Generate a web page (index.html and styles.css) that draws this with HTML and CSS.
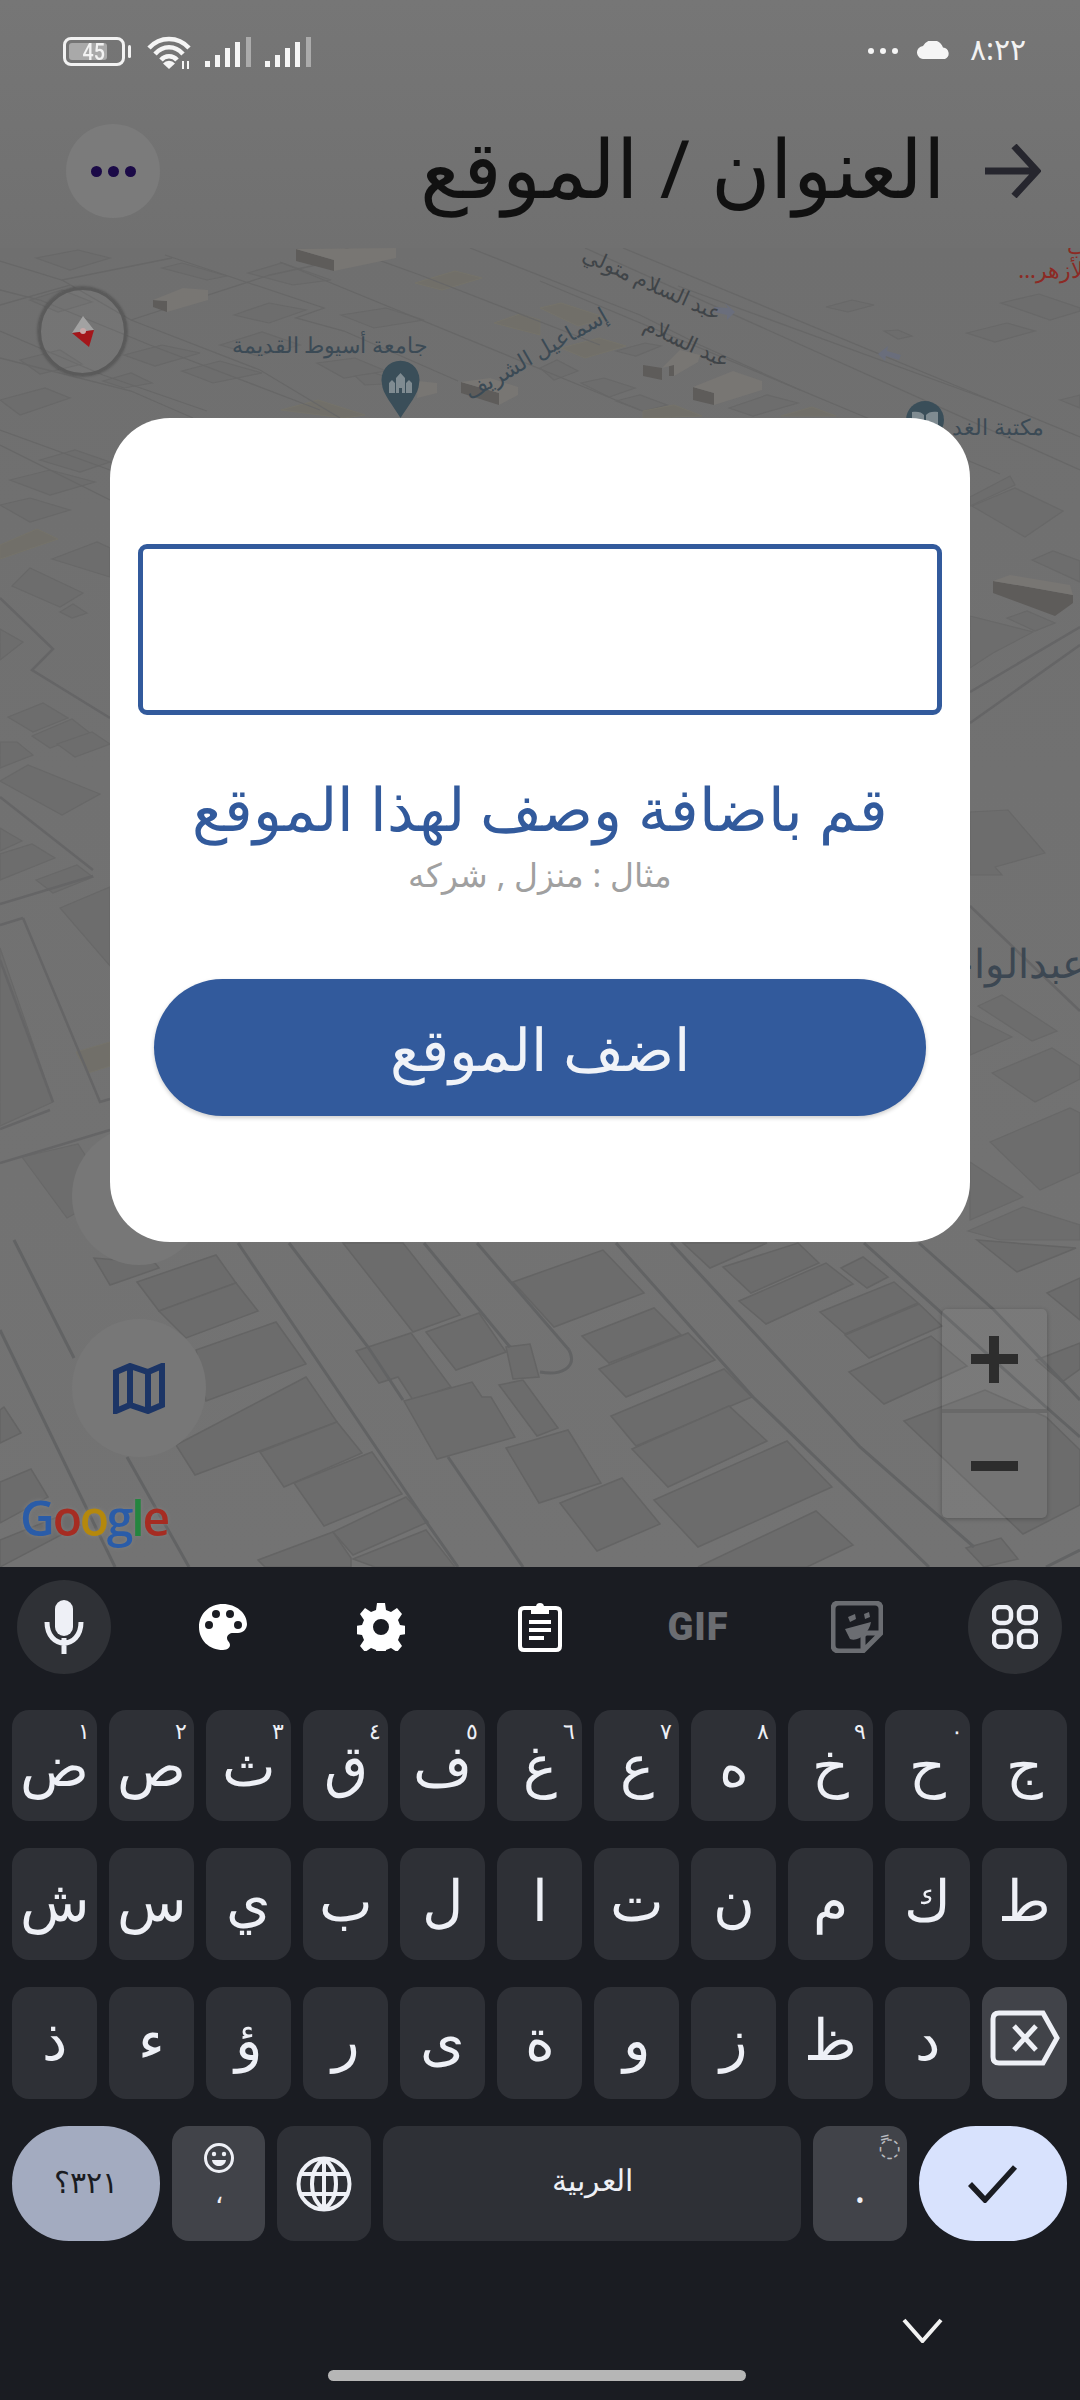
FILE: index.html
```html
<!doctype html>
<html lang="ar">
<head>
<meta charset="utf-8">
<title>العنوان / الموقع</title>
<link rel="stylesheet" href="styles.css">
</head>
<body>
<div class="page">
  <header class="top">
    <div class="status">
      <div class="status-left">
        <div class="battery"><span class="battery-fill"></span><span class="battery-num">45</span></div>
        <span class="battery-tip"></span>
        <svg class="wifi" viewBox="0 0 46 34"><path class="wifi-arc" d="M3 13C14 1 32 1 43 13"/><path class="wifi-arc" d="M9 19C17 10 29 10 37 19"/><path class="wifi-arc" d="M15 25C19 20 27 20 31 25"/><path class="wifi-dot" d="M23 34l-6-5.500a8 8 0 0 1 12 0z"/><path class="wifi-dot" d="M36 26h2v8h-2zM41 26h2v8h-2z"/></svg>
        <svg class="signal" viewBox="0 0 47 30"><path class="bar-on" d="M0 24h5v6H0zM10 18h5v12h-5zM20 11h5v19h-5zM30 5h5v25h-5z"/><path class="bar-off" d="M41 0h5v30h-5z"/></svg>
        <svg class="signal signal-2" viewBox="0 0 47 30"><path class="bar-on" d="M0 24h5v6H0zM10 18h5v12h-5zM20 11h5v19h-5zM30 5h5v25h-5z"/><path class="bar-off" d="M41 0h5v30h-5z"/></svg>
      </div>
      <div class="status-right">
        <span class="sdots"><i></i><i></i><i></i></span>
        <svg class="cloud" viewBox="0 0 34 18"><path d="M7 18a6.500 6.500 0 0 1-1-13A11 11 0 0 1 26 6.500 6 6 0 0 1 28 18z"/></svg>
        <span class="clock">٨:٢٢</span>
      </div>
    </div>
    <div class="appbar">
      <button class="more"><i></i><i></i><i></i></button>
      <div class="appbar-title">
        <h1 class="title">العنوان / الموقع</h1>
        <svg class="back" viewBox="0 0 56 54"><path d="M0 27H52M29 2l23 25-23 25"/></svg>
      </div>
    </div>
  </header>

  <main class="map">
    <svg class="map-svg" viewBox="0 248 1080 1319" preserveAspectRatio="none">
      <g class="blocks">
        <polygon points="94,1258 110,1285 159,1268 155,1263"/>
        <polygon points="137,1282 216,1255 236,1283 159,1311"/>
        <polygon points="159,1311 236,1283 258,1311 186,1338"/>
        <polygon points="196,1350 276,1322 306,1364 206,1401"/>
        <polygon points="176,1445 306,1377 337,1422 195,1475"/>
        <polygon points="260,1452 337,1422 362,1453 284,1487"/>
        <polygon points="294,1483 372,1452 402,1494 324,1526"/>
        <polygon points="333,1532 406,1497 428,1522 353,1555"/>
        <polygon points="353,1559 426,1530 455,1567 375,1567"/>
        <polygon points="258,1560 333,1532 351,1558 351,1567 265,1567"/>
        <polygon points="0,1443 21,1433 4,1407 0,1410"/>
        <polygon points="0,1482 31,1469 48,1497 0,1523"/>
        <polygon points="0,1540 70,1512 80,1525 0,1567"/>
        <polygon points="343,1243 403,1243 460,1315 413,1332"/>
        <polygon points="356,1351 411,1333 451,1387 413,1400 398,1377 379,1383"/>
        <polygon points="426,1332 479,1313 506,1352 456,1370"/>
        <polygon points="404,1401 472,1382 482,1397 491,1397 515,1437 437,1459"/>
        <polygon points="506,1347 530,1344 539,1377 513,1379"/>
        <polygon points="499,1385 523,1380 558,1428 537,1436"/>
        <polygon points="506,1448 568,1430 601,1483 539,1503"/>
        <polygon points="560,1503 622,1478 660,1524 597,1551"/>
        <polygon points="513,1282 603,1250 644,1293 554,1327"/>
        <polygon points="582,1336 654,1308 681,1335 609,1363"/>
        <polygon points="599,1369 688,1333 715,1360 626,1397"/>
        <polygon points="611,1416 724,1369 752,1397 636,1446"/>
        <polygon points="632,1449 729,1406 767,1441 668,1487"/>
        <polygon points="654,1500 787,1441 832,1487 698,1547"/>
        <polygon points="698,1567 816,1511 853,1545 807,1567"/>
        <polygon points="683,1243 767,1243 710,1268"/>
        <polygon points="723,1267 798,1243 819,1263 751,1293"/>
        <polygon points="739,1301 826,1263 853,1284 766,1324"/>
        <polygon points="841,1268 863,1257 888,1277 867,1288"/>
        <polygon points="820,1312 894,1282 918,1303 845,1334"/>
        <polygon points="845,1335 919,1304 942,1326 869,1358"/>
        <polygon points="849,1372 931,1336 967,1366 884,1404"/>
        <polygon points="904,1421 985,1390 1046,1417 1080,1450 1080,1505 1023,1534"/>
        <polygon points="966,1548 1001,1538 1018,1559 984,1567"/>
        <polygon points="977,1240 1076,1248 1017,1272"/>
        <polygon points="1047,1293 1080,1278 1080,1320"/>
        <polygon points="1036,1360 1080,1343 1080,1369 1062,1382"/>
      </g>
      <g class="blocks blocks-soft">
        <polygon points="40,460 75,450 110,462 80,472"/>
        <polygon points="10,480 50,470 95,482 50,495"/>
        <polygon points="0,505 30,498 70,510 30,522"/>
        <polygon points="12,586 30,568 83,593 60,607"/>
        <polygon points="60,612 73,604 87,613 72,618"/>
        <polygon points="52,559 97,542 110,548 110,577"/>
        <polygon points="0,629 23,642 0,660"/>
        <polygon points="8,717 43,703 68,718 33,732"/>
        <polygon points="32,736 72,719 90,733 50,748"/>
        <polygon points="57,744 92,732 110,744 75,757"/>
        <polygon points="0,742 17,742 33,755 0,768"/>
        <polygon points="0,781 28,765 100,794 62,815"/>
        <polygon points="0,828 22,841 0,851"/>
        <polygon points="0,854 32,844 55,858 0,880"/>
        <polygon points="36,880 77,865 93,877 53,893"/>
        <polygon points="60,908 110,887 110,966"/>
        <polygon points="0,948 53,1102 0,1126"/>
        <polygon points="22,1157 78,1144 110,1194 67,1218"/>

        <polygon points="972,506 1015,488 1063,511 1025,537"/>
        <polygon points="970,497 1010,476 1015,485 970,506"/>
        <polygon points="1032,560 1053,551 1080,561 1080,582"/>
        <polygon points="1007,618 1027,611 1055,623 1035,631"/>
        <polygon points="970,616 1033,632 993,653 970,668"/>
        <polygon points="970,812 1008,810 1045,853 995,867 1002,875 970,875"/>
        <polygon points="978,1006 1002,995 1057,1031 1032,1041"/>
        <polygon points="970,1016 1012,1037 970,1055"/>
        <polygon points="992,1073 1052,1048 1080,1066 1080,1079 1035,1102"/>
        <polygon points="990,1142 1070,1108 1080,1113 1080,1172 1040,1190"/>
        <polygon points="970,1162 1023,1197 970,1220"/>
        <polygon points="968,1231 1023,1207 1080,1225 1080,1240 1000,1240"/>

        <polygon points="103,381 131,373 152,383 124,388"/>
        <polygon points="124,355 162,345 200,353 155,366"/>
        <polygon points="182,371 220,361 262,373 213,383"/>
        <polygon points="317,363 355,358 386,371 344,378"/>
        <polygon points="355,376 375,373 403,383 365,385"/>
        <polygon points="341,315 386,308 424,320 374,328"/>
        <polygon points="234,315 269,303 306,310 269,323"/>
        <polygon points="248,273 282,263 331,280 293,285"/>
        <polygon points="162,268 182,263 227,276 207,280"/>
        <polygon points="826,307 852,300 874,305 848,312"/>
        <polygon points="884,331 898,330 912,336 898,339"/>
        <polygon points="967,333 1007,323 1035,331 995,342"/>
        <polygon points="1001,303 1039,294 1080,308 1080,311 1050,320"/>
        <polygon points="1060,400 1080,395 1080,408"/>
        <polygon points="616,351 645,343 661,346 636,356"/>
        <polygon points="540,368 557,360 578,371 554,380"/>
        <polygon points="581,383 604,378 635,388 609,397"/>
        <polygon points="616,401 640,395 667,405 643,411"/>
        <polygon points="729,408 767,395 798,403 753,416"/>
        <polygon points="30,300 62,290 92,302 58,312"/>
        <polygon points="20,360 60,350 82,364 40,374"/>
        <polygon points="220,345 262,332 300,345 258,356"/>
        <polygon points="0,400 45,388 70,398 20,415"/>
        <polygon points="36,258 78,250 110,258 70,270"/>
      </g>
      <g class="yellow">
        <polygon points="0,545 37,529 58,539 0,559"/>
        <polygon points="76,1052 110,1042 110,1066 88,1073"/>
        <polygon points="415,283 455,271 482,278 442,290"/>
        <polygon points="494,323 520,314 540,320 540,335"/>
        <polygon points="281,410 318,400 365,415 344,418"/>
        <polygon points="540,308 561,303 607,318 578,326"/>
        <polygon points="561,348 599,338 626,346 585,358"/>
        <polygon points="643,411 674,405 702,416 643,418"/>
        <polygon points="781,416 812,407 836,416"/>
      </g>
      <g class="roads">
        <polyline points="14,1240 74,1358"/>
        <polyline points="127,1457 189,1567"/>
        <polyline points="0,1330 115,1567"/>
        <polyline points="238,1243 427,1523 458,1567"/>
        <polyline points="289,1243 368,1347 403,1400"/>
        <polyline points="448,1457 523,1567"/>
        <polyline points="424,1243 510,1347"/>
        <polyline points="477,1243 569,1350"/>
        <path d="M569 1350C578 1368 560 1376 540 1372"/>
        <polyline points="616,1243 753,1397 929,1567"/>
        <polyline points="671,1243 860,1447 974,1547"/>
        <polyline points="864,1243 1046,1407 1080,1437"/>
        <polyline points="919,1243 994,1310 1080,1400"/>
        <polyline points="1046,1567 1080,1550"/>
      </g>
      <g class="roads roads-soft">
        <polyline points="0,598 53,649 32,670 110,718"/>
        <polyline points="0,797 93,870"/>
        <polyline points="0,904 93,876"/>
        <polyline points="0,1163 110,1130"/>
        <polyline points="0,1129 50,1110"/>
        <polyline points="23,918 100,1102 110,1099"/>
        <polyline points="0,925 23,918"/>
        <polyline points="0,960 53,1102"/>
        <polyline points="970,692 1080,627"/>
        <polyline points="970,723 1080,645"/>
        <polyline points="970,906 1080,1011"/>
      </g>
      <g class="roads-thin">
        <polyline points="165,255 324,308 296,318 344,331 458,381"/>
        <polyline points="0,331 103,375 207,411"/>
        <polyline points="0,358 131,391 193,418"/>
        <polyline points="0,261 62,280 172,258"/>
        <polyline points="62,280 131,320 260,370 340,418"/>
        <polyline points="585,248 1080,470"/>
        <polyline points="623,248 1080,437"/>
        <polyline points="540,281 884,425 1000,474"/>
        <polyline points="678,286 998,403"/>
        <polyline points="280,262 640,410"/>
        <polyline points="345,248 420,275 600,345"/>
        <polyline points="470,248 640,315 700,345 800,390"/>
        <polyline points="0,290 40,300 150,345 320,410"/>
        <polyline points="0,305 70,285"/>
        <polyline points="131,320 270,275 330,262"/>
        <polyline points="0,430 110,470"/>
        <polyline points="0,445 110,500"/>
      </g>
      <g class="face">
        <polygon points="296,249 334,260 334,271 296,261"/>
        <polygon points="153,300 167,301 167,312 153,307"/>
        <polygon points="643,365 662,368 662,380 643,376"/>
        <polygon points="669,365 674,365 674,376 669,376"/>
        <polygon points="693,387 714,393 714,405 693,400"/>
        <polygon points="461,382 499,393 499,405 461,393"/>
        <polygon points="993,581 1023,586 1073,595 1073,603 1055,616 993,593"/>
      </g>
      <g class="roof">
        <polygon points="296,249 396,248 396,258 334,271 334,260"/>
        <polygon points="153,300 183,288 208,290 208,300 167,312 167,301"/>
        <polygon points="662,368 680,350 700,355 698,362 674,376 674,365"/>
        <polygon points="693,387 733,371 762,381 762,390 714,405 714,393"/>
        <polygon points="461,382 490,378 518,387 518,395 499,405 499,393"/>
        <polygon points="418,381 437,383 437,393 417,398"/>
        <polygon points="993,581 1010,575 1070,585 1073,595 1023,586"/>
      </g>
      <g class="arrows">
        <path d="M714 307l14 1-3-5 10 9-8 8 0-5-13-3z"/>
        <path d="M878 354l10-8-1 5 14 4-2 5-13-4-1 5z"/>
      </g>
      <g class="pin">
        <path d="M382 384a19 19 0 1 1 37 0c0 9-11 22-18.500 34-7-12-18.500-25-18.500-34z"/>
        <circle cx="925" cy="420" r="19"/>
      </g>
      <path class="pin-art" d="M389 393v-10l3-3 3 3v10zM396 393v-15l4.500-5 4.500 5v15h-3v-5h-3v5zM406 393v-10l3-3 3 3v10z"/>
      <path class="pin-art" d="M912 412c5-1 10 0 12 3v15c-3-2-7-3-12-2zM938 412c-5-1-10 0-12 3v15c3-2 7-3 12-2z"/>
      <text class="lbl" x="330" y="353" text-anchor="middle">جامعة أسيوط القديمة</text>
      <text class="lbl" x="536" y="361" text-anchor="middle" transform="rotate(-30 536 353)">إسماعيل الشريف</text>
      <text class="lbl road-lbl" x="652" y="291" text-anchor="middle" transform="rotate(24 652 284)">عبد السلام متولي</text>
      <text class="lbl road-lbl" x="687" y="350" text-anchor="middle" transform="rotate(25 687 343)">عبد السلام</text>
      <text class="lbl" x="998" y="435" text-anchor="middle">مكتبة الغد</text>
      <text class="lbl-red" x="1088" y="254" text-anchor="start">ب</text>
      <text class="lbl-red" x="1090" y="278" text-anchor="start">الأزهر...</text>
      <text class="lbl-big" x="1086" y="978" text-anchor="start">عبدالواحد</text>
    </svg>

    <div class="compass">
      <svg viewBox="0 0 24 31"><path class="needle-grey" d="M12 0L1 17 23 14z"/><path class="needle-red" d="M1 17L23 14 18 31z"/><circle class="needle-pin" cx="12" cy="15" r="3"/></svg>
    </div>
    <div class="fab fab-hidden"></div>
    <button class="fab fab-map">
      <svg viewBox="0 0 52 51"><path d="M3 9L17 3 35 9 49 3V42L35 48 17 42 3 48ZM17 3V42M35 9V48"/></svg>
    </button>
    <div class="logo" aria-label="Google"><svg viewBox="0 0 160 56"><text class="g-text" x="6" y="45"><tspan class="g-b">G</tspan><tspan class="g-r">o</tspan><tspan class="g-y">o</tspan><tspan class="g-b">g</tspan><tspan class="g-g">l</tspan><tspan class="g-r">e</tspan></text></svg></div>
    <div class="zoom">
      <button class="zoom-btn"><span class="plus"></span></button>
      <button class="zoom-btn zoom-btn-last"><span class="minus"></span></button>
    </div>
  </main>

  <section class="kbd">
    <div class="tools">
      <span class="tool tool-round"><svg class="i-mic" viewBox="0 0 40 54"><rect x="11" y="0" width="18" height="36" rx="9"/><path class="ln" d="M3 22c0 28 34 28 34 0M20 38v16"/></svg></span>
      <span class="tool"><svg class="i-pal" viewBox="0 0 48 46"><path fill-rule="evenodd" d="M24 0C10 0 0 10 0 23s10 23 24 23c5 0 7-3 7-5 0-3-3-4-3-7 0-3 3-5 6-5h5c5 0 9-4 9-9C48 9 37 0 24 0zM10 25a4 4 0 1 1 0-8 4 4 0 0 1 0 8zM17 14a4 4 0 1 1 0-8 4 4 0 0 1 0 8zM31 14a4 4 0 1 1 0-8 4 4 0 0 1 0 8zM39 25a4 4 0 1 1 0-8 4 4 0 0 1 0 8z"/></svg></span>
      <span class="tool"><svg class="i-gear" viewBox="0 0 48 48"><path fill-rule="evenodd" d="M20 0h8l1 7 5 2 6-4 5 6-4 6 2 5 7 1v8l-7 1-2 5 4 6-5 6-6-4-5 2-1 7h-8l-1-7-5-2-6 4-5-6 4-6-2-5-7-1v-8l7-1 2-5-4-6 5-6 6 4 5-2zM24 16a8 8 0 1 0 0 16 8 8 0 0 0 0-16z"/></svg></span>
      <span class="tool"><svg class="i-clip" viewBox="0 0 44 50"><path class="ln" d="M6 6H14M30 6H38Q42 6 42 10V44Q42 48 38 48H6Q2 48 2 44V10Q2 6 6 6Z"/><path d="M13 9V5H18a4 4 0 0 1 8 0H31V12H13ZM11 18H33V22H11ZM11 26H33V30H11ZM11 34H26V38H11Z"/></svg></span>
      <span class="tool tool-gif">GIF</span>
      <span class="tool"><svg class="i-stk" viewBox="0 0 52 52"><path class="ln-g" d="M8 2H44Q50 2 50 8V32L32 50H8Q2 50 2 44V8Q2 2 8 2ZM50 32H36Q32 32 32 36V50"/><path class="fl-g" d="M17 16l7-3 1 5-6 3zM33 13l5-2 1 5-5 2zM14 28L40 21C38 33 27 41 19 38Z"/></svg></span>
      <span class="tool tool-round"><svg class="i-grid" viewBox="0 0 46 44"><rect x="2" y="2" width="17" height="16" rx="6"/><rect x="27" y="2" width="17" height="16" rx="6"/><rect x="2" y="26" width="17" height="16" rx="6"/><rect x="27" y="26" width="17" height="16" rx="6"/></svg></span>
    </div>

    <div class="row row-1">
      <span class="key">ض<sup class="hint">١</sup></span><span class="key">ص<sup class="hint">٢</sup></span><span class="key">ث<sup class="hint">٣</sup></span><span class="key">ق<sup class="hint">٤</sup></span><span class="key">ف<sup class="hint">٥</sup></span><span class="key">غ<sup class="hint">٦</sup></span><span class="key">ع<sup class="hint">٧</sup></span><span class="key">ه<sup class="hint">٨</sup></span><span class="key">خ<sup class="hint">٩</sup></span><span class="key">ح<sup class="hint">٠</sup></span><span class="key">ج</span>
    </div>
    <div class="row row-2">
      <span class="key">ش</span><span class="key">س</span><span class="key">ي</span><span class="key">ب</span><span class="key">ل</span><span class="key">ا</span><span class="key">ت</span><span class="key">ن</span><span class="key">م</span><span class="key">ك</span><span class="key">ط</span>
    </div>
    <div class="row row-3">
      <span class="key">ذ</span><span class="key">ء</span><span class="key">ؤ</span><span class="key">ر</span><span class="key">ى</span><span class="key">ة</span><span class="key">و</span><span class="key">ز</span><span class="key">ظ</span><span class="key">د</span>
      <span class="key key-func"><svg class="i-del" viewBox="0 0 70 56"><path class="ln" d="M9 3H53L67 28 53 53H9Q3 53 3 47V9Q3 3 9 3ZM24 16L46 40M46 16L24 40"/></svg></span>
    </div>
    <div class="row-bottom">
      <span class="key key-sym">؟٣٢١</span>
      <span class="key key-func key-emoji"><svg class="i-smile" viewBox="0 0 30 30"><circle class="ln" cx="15" cy="15" r="13.500"/><circle class="fl" cx="10" cy="11" r="2.200"/><circle class="fl" cx="20" cy="11" r="2.200"/><path class="fl" d="M8 17H22C21 25 9 25 8 17Z"/></svg><span class="comma">،</span></span>
      <span class="key key-globe"><svg class="i-globe" viewBox="0 0 56 56"><circle class="ln" cx="28" cy="28" r="25.500"/><path class="ln" d="M5 18H51M5 38H51M28 3V53M28 3C12 14 12 42 28 53M28 3C44 14 44 42 28 53"/></svg></span>
      <span class="key key-space">العربية</span>
      <span class="key key-func key-dot"><span class="dot-main">.</span><span class="dot-hint">◌ً</span></span>
      <span class="key key-enter"><svg class="i-check" viewBox="0 0 50 38"><path d="M2 19L17 35 47 2"/></svg></span>
    </div>
    <div class="kbd-foot">
      <svg class="chev" viewBox="0 0 41 25"><path d="M2 2L20.500 23 39 2"/></svg>
      <span class="home-bar"></span>
    </div>
  </section>

  <div class="dialog">
    <div class="field"></div>
    <p class="d-title">قم باضافة وصف لهذا الموقع</p>
    <p class="d-sub">مثال : منزل , شركه</p>
    <button class="d-btn">اضف الموقع</button>
  </div>
</div>
</body>
</html>
```
FILE: styles.css
```css
*{box-sizing:border-box}
html,body{margin:0;padding:0}
body{background:#1a1c22;font-family:"Noto Sans",sans-serif}
button{border:0;padding:0;margin:0;font:inherit;color:inherit}
.page{position:relative;width:1080px;height:2400px;display:flex;flex-direction:column;overflow:hidden}

/* top */
.top{height:248px;background:linear-gradient(#767676,#707070);flex:none;display:flex;flex-direction:column}
.status{height:100px;padding:35px 54px 0 63px;display:flex;justify-content:space-between;align-items:flex-start;flex:none}
.status-left{display:flex;align-items:flex-start}
.battery{position:relative;width:62px;height:29px;margin-top:2px;border:3px solid #f2f2f2;border-radius:8px;overflow:hidden;display:flex;align-items:center;justify-content:center}
.battery-fill{position:absolute;left:3px;top:3px;bottom:3px;width:38px;background:#a9a9a9;border-radius:3px}
.battery-num{position:relative;font:500 24px/1 "Roboto",sans-serif;color:#f2f2f2;transform:scaleX(.82)}
.battery-tip{width:3px;height:13px;margin:10px 0 0 3px;background:#f2f2f2;border-radius:2px}
.wifi{width:46px;height:34px;margin-left:15px}
.wifi-arc{fill:none;stroke:#f5f5f5;stroke-width:4.500}
.wifi-dot{fill:#f5f5f5}
.signal{width:47px;height:30px;margin:2px 0 0 13px}
.signal-2{margin-left:13px}
.bar-on{fill:#f5f5f5}
.bar-off{fill:#ababab}
.status-right{display:flex;align-items:flex-start;gap:19px}
.sdots{display:flex;gap:6px;margin-top:13px}
.sdots i{width:6px;height:6px;border-radius:50%;background:#f5f5f5}
.cloud{width:34px;height:18px;margin-top:6px;fill:#f5f5f5}
.clock{font:400 30px/1 "Noto Sans",sans-serif;color:#f2f2f2;margin-top:-1px}
.appbar{flex:1;display:flex;justify-content:space-between;align-items:flex-start;padding:24px 39px 0 66px}
.more{width:94px;height:94px;border-radius:50%;background:#7b7b7b;display:flex;align-items:center;justify-content:center;gap:6px}
.more i{width:11px;height:11px;border-radius:50%;background:#1b0a47}
.appbar-title{display:flex;align-items:center;gap:39px;height:94px}
.title{margin:-8px 0 0;font-size:81px;line-height:1.4;font-weight:400;color:#111}
.back{width:56px;height:54px;fill:none;stroke:#26262e;stroke-width:7}

/* map */
.map{position:relative;flex:none;height:1319px;background:linear-gradient(#6f6f6f,#717171 40%,#737373);overflow:hidden}
.map-svg{position:absolute;inset:0;width:100%;height:100%;display:block}
.blocks polygon{fill:#6c6c6c;stroke:#646464;stroke-width:1.500}
.blocks-soft polygon{fill:#6d6d6d;stroke:#686868;stroke-width:1.200}
.yellow polygon{fill:#716f69;stroke:#75736a;stroke-width:1}
.roads polyline,.roads path{fill:none;stroke:#626364;stroke-width:3}
.roads-soft polyline{stroke:#656566;stroke-width:2.500}
.roads-thin polyline{fill:none;stroke:#676767;stroke-width:1.300}
.face polygon{fill:#5e5c5a}
.roof polygon{fill:#787673}
.arrows path{fill:#6a6e7c}
.pin path,.pin circle{fill:#3a4e59}
.pin-art{fill:#7f8b91}
.lbl{font-size:22px;fill:#3b4a55}
.road-lbl{font-size:21px;fill:#3f4448}
.lbl-red{font-size:22px;fill:#8c2a24;direction:rtl}
.lbl-big{font-size:40px;fill:#3c4752;direction:rtl}
.compass{position:absolute;left:38px;top:39px;width:89px;height:89px;border-radius:50%;border:3px solid #5a5a5a;background:rgba(255,255,255,.04);box-shadow:0 0 3px rgba(0,0,0,.4);display:flex;align-items:center;justify-content:center}
.compass svg{width:24px;height:31px}
.needle-grey{fill:#a2a2a2}
.needle-red{fill:#a4161a}
.needle-pin{fill:#c9a8a8}
.fab{position:absolute;left:72px;width:134px;height:138px;border-radius:50%;background:#777;display:flex;align-items:center;justify-content:center}
.fab-hidden{top:879px}
.fab-map{top:1071px}
.fab-map svg{width:52px;height:51px;fill:none;stroke:#1c3566;stroke-width:6}
.logo{position:absolute;left:14px;top:1243px;width:160px;height:56px}
.logo svg{width:160px;height:56px;display:block;overflow:visible;filter:drop-shadow(0 0 2px #808080)}
.g-text{font:600 48px "Open Sans",sans-serif;letter-spacing:-2.200px}
.g-b{fill:#2a5ca8}
.g-r{fill:#a62c22}
.g-y{fill:#b5880c}
.g-g{fill:#24853f}
.zoom{position:absolute;left:942px;top:1061px;width:105px;height:209px;border-radius:5px;background:rgba(255,255,255,.055);box-shadow:0 1px 4px rgba(0,0,0,.25);display:flex;flex-direction:column}
.zoom-btn{height:104px;background:none;display:flex;align-items:center;justify-content:center;border-bottom:4px solid #696969;flex:none}
.zoom-btn-last{border-bottom:0;flex:1}
.plus{position:relative;width:47px;height:47px;display:block}
.plus::before,.plus::after{content:"";position:absolute;background:#2d2d2d}
.plus::before{left:0;right:0;top:18px;height:10px}
.plus::after{top:0;bottom:0;left:18px;width:10px}
.minus{width:47px;height:10px;background:#2d2d2d;display:block}

/* keyboard */
.kbd{flex:1;background:#1a1c22;display:flex;flex-direction:column;padding-top:13px;color:#eef0f6;min-height:0}
.tools{display:flex;justify-content:space-between;padding:0 18px 0 17px;height:94px;flex:none}
.tool{width:94px;height:94px;display:flex;align-items:center;justify-content:center;border-radius:50%}
.tool-round{background:#2f3136}
.ln{fill:none;stroke:#eef0f6}
.fl{fill:#eef0f6}
.i-mic{width:40px;height:54px;fill:#eef0f6}
.i-mic .ln{stroke-width:5}
.i-pal{width:48px;height:46px;fill:#fff}
.i-gear{width:48px;height:48px;fill:#fff}
.i-clip{width:44px;height:50px;fill:#fff}
.i-clip .ln{stroke:#fff;stroke-width:4}
.tool-gif{font:900 38px/1 "Roboto",sans-serif;color:#6b6d72;letter-spacing:1px}
.i-stk{width:52px;height:52px}
.ln-g{fill:none;stroke:#6b6d72;stroke-width:5}
.fl-g{fill:#6b6d72}
.i-grid{width:46px;height:44px;fill:none;stroke:#eef0f6;stroke-width:4.500}
.row{display:grid;grid-template-columns:repeat(11,85px);column-gap:12px;padding:0 12px;height:112px;flex:none}
.row-1{margin-top:36px;height:111px}
.row-2,.row-3{margin-top:27px}
.key{position:relative;background:#2e3036;border-radius:17px;display:flex;align-items:center;justify-content:center;font-size:57px;line-height:1;padding-bottom:10px;color:#eef0f6}
.row-1 .key{padding-top:8px}
.hint{position:absolute;top:9px;right:7px;font-size:22px;line-height:1;vertical-align:baseline}
.key-func{background:#414349}
.i-del{width:70px;height:56px}
.i-del .ln{stroke-width:5}
.row-bottom{display:flex;gap:12px;padding:0 13px 0 12px;margin-top:27px;height:115px;flex:none}
.key-sym{width:148px;border-radius:57px;background:#a3abc0;color:#1a1c22;font-size:30px;padding-bottom:4px;direction:ltr;unicode-bidi:bidi-override}
.key-emoji{width:93px;flex-direction:column;gap:8px;padding:0;justify-content:flex-start;padding-top:17px}
.i-smile{width:30px;height:30px}
.i-smile .ln{stroke-width:3}
.comma{font-size:26px;line-height:24px}
.key-globe{width:94px;padding:0}
.i-globe{width:56px;height:56px}
.i-globe .ln{stroke-width:4}
.key-space{flex:1;font-size:30px;padding-bottom:8px}
.key-dot{width:94px}
.dot-main{font-size:42px;line-height:1;position:absolute;left:0;right:0;text-align:center;top:40px}
.dot-hint{position:absolute;top:8px;right:6px;font:26px/1 "DejaVu Sans",sans-serif;color:#b9bbc0}
.key-enter{width:148px;border-radius:57px;background:#d8e2fd;padding:0}
.i-check{width:50px;height:38px;fill:none;stroke:#1a1c22;stroke-width:5.500}
.kbd-foot{position:relative;flex:1;display:flex;flex-direction:column;align-items:flex-start;padding-top:77px}
.chev{width:41px;height:25px;margin-left:902px;fill:none;stroke:#f2f2f2;stroke-width:4}
.home-bar{width:418px;height:11px;border-radius:6px;background:#b6b6b6;margin:27px 0 0 328px}

/* dialog */
.dialog{position:absolute;left:110px;top:418px;width:860px;height:824px;background:#fff;border-radius:60px;padding:126px 28px 0;display:flex;flex-direction:column;align-items:center}
.field{width:100%;height:171px;border:5px solid #325a9c;border-radius:9px;flex:none}
.d-title{margin:56px 0 0;color:#325a9c;font-size:60px;line-height:74px;text-align:center;white-space:nowrap}
.d-sub{margin:10px 0 0;color:#a0a0a0;font-size:32.500px;line-height:40px;text-align:center}
.d-btn{width:772px;height:137px;margin-top:84px;border-radius:69px;background:#325a9c;color:#f0f3f8;font-size:59px;box-shadow:0 2px 4px rgba(0,0,0,.2);display:flex;align-items:center;justify-content:center;flex:none}
```
